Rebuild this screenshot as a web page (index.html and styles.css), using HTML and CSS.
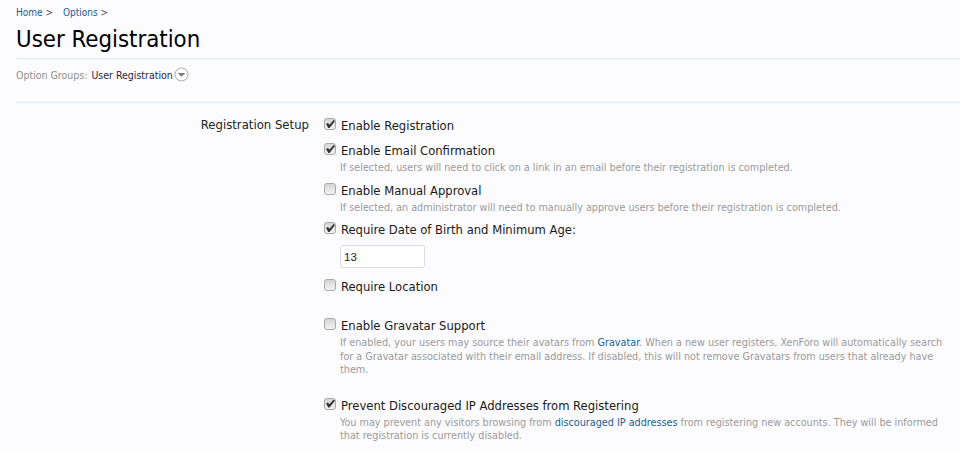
FILE: index.html
```html
<!DOCTYPE html>
<html lang="en">
<head>
<meta charset="utf-8">
<title>User Registration</title>
<link rel="stylesheet" href="styles.css">
</head>
<body>
<div class="page">
  <nav class="crumbs"><a href="#">Home</a> <span class="sep">&gt;</span><a class="second" href="#">Options</a> <span class="sep">&gt;</span></nav>
  <h1 class="title">User Registration</h1>
  <div class="groups">
    <span class="groups-label">Option Groups:</span>
    <span class="groups-value">User Registration</span>
    <svg class="groups-icon" width="15" height="15" viewBox="0 0 15 15"><circle cx="7.5" cy="7.5" r="6.5" fill="#fff" stroke="#aaa"/><path d="M3.8 6h7.4L7.5 9.8z" fill="#777"/></svg>
  </div>
  <div class="form-row">
    <div class="row-label">Registration Setup</div>
    <ul class="options">
      <li class="opt opt-first"><label class="check"><span class="box on"></span>Enable Registration</label></li>
      <li class="opt"><label class="check"><span class="box on"></span>Enable Email Confirmation</label>
        <p class="hint">If selected, users will need to click on a link in an email before their registration is completed.</p></li>
      <li class="opt"><label class="check"><span class="box"></span>Enable Manual Approval</label>
        <p class="hint">If selected, an administrator will need to manually approve users before their registration is completed.</p></li>
      <li class="opt opt-age"><label class="check"><span class="box on"></span>Require Date of Birth and Minimum Age:</label>
        <input class="age" type="text" value="13"></li>
      <li class="opt"><label class="check"><span class="box"></span>Require Location</label></li>
      <li class="opt opt-gap"><label class="check"><span class="box"></span>Enable Gravatar Support</label>
        <p class="hint">If enabled, your users may source their avatars from <a href="#">Gravatar</a>. When a new user registers, XenForo will automatically search for a Gravatar associated with their email address. If disabled, this will not remove Gravatars from users that already have them.</p></li>
      <li class="opt opt-last"><label class="check"><span class="box on"></span>Prevent Discouraged IP Addresses from Registering</label>
        <p class="hint">You may prevent any visitors browsing from <a href="#">discouraged IP addresses</a> from registering new accounts. They will be informed that registration is currently disabled.</p></li>
    </ul>
  </div>
</div>
</body>
</html>
```
FILE: styles.css
```css
* { box-sizing: border-box; }
html, body { margin: 0; height: 100%; overflow: hidden; }
body {
  background: #fcfcff;
  color: #141414;
  font-family: "DejaVu Sans", sans-serif;
  font-stretch: condensed;
  font-size: 11px;
}
a { color: #176093; text-decoration: none; }
.page { padding: 6px 0 0 16px; }
.crumbs { height: 14px; line-height: 14px; font-size: 10px; }
.sep { color: #555; }
.second { margin-left: 10px; }
.title {
  margin: 1px 0 0;
  height: 38px;
  line-height: 36px;
  font-size: 23.75px;
  font-weight: 400;
  color: #000;
  border-bottom: 1px solid #d7edfc;
}
.groups {
  display: flex;
  align-items: center;
  height: 44px;
  padding-bottom: 12px;
  font-size: 10.5px;
  border-bottom: 1px solid #d7edfc;
}
.groups-label { color: #8e8e8e; margin-right: 4px; }
.groups-value { color: #2b2440; }
.groups-icon { margin-left: 1px; }
.form-row { display: flex; padding-top: 13px; }
.row-label { width: 293px; text-align: right; font-size: 13px; line-height: 18px; color: #222; }
.options { list-style: none; margin: 0 0 0 15px; padding: 0; width: 620px; }
.opt { margin-top: 6px; }
.opt-first { margin: 0; }
.opt-age { padding-bottom: 3px; }
.opt-gap { margin-top: 20px; }
.opt-last { margin-top: 19px; }
.check { display: flex; align-items: center; height: 19px; font-size: 12.9px; color: #1a1a1a; }
.box {
  width: 12px; height: 12px; margin: -3px 5px 0 0; flex: none;
  border: 1px solid #a8a8a8; border-radius: 3px;
  background: linear-gradient(#d6d6d6, #f3f3f3);
  position: relative;
}
.on::after {
  content: "";
  position: absolute; left: 1px; top: 1px;
  width: 9px; height: 8px;
  background: #333;
  clip-path: polygon(0 50%, 22% 38%, 38% 58%, 85% 0, 100% 12%, 40% 100%, 25% 100%);
}
.hint { margin: 1px 0 0 16px; font-size: 10.72px; line-height: 13.5px; color: #9a9a9a; }
.age {
  display: block; margin: 6px 0 0 16px; width: 85px; height: 23px;
  border: 1px solid #ddd; border-radius: 3px; background: #fff; padding: 0 3px;
  font-family: "Liberation Sans", sans-serif; font-size: 11.5px; color: #222;
}
```
